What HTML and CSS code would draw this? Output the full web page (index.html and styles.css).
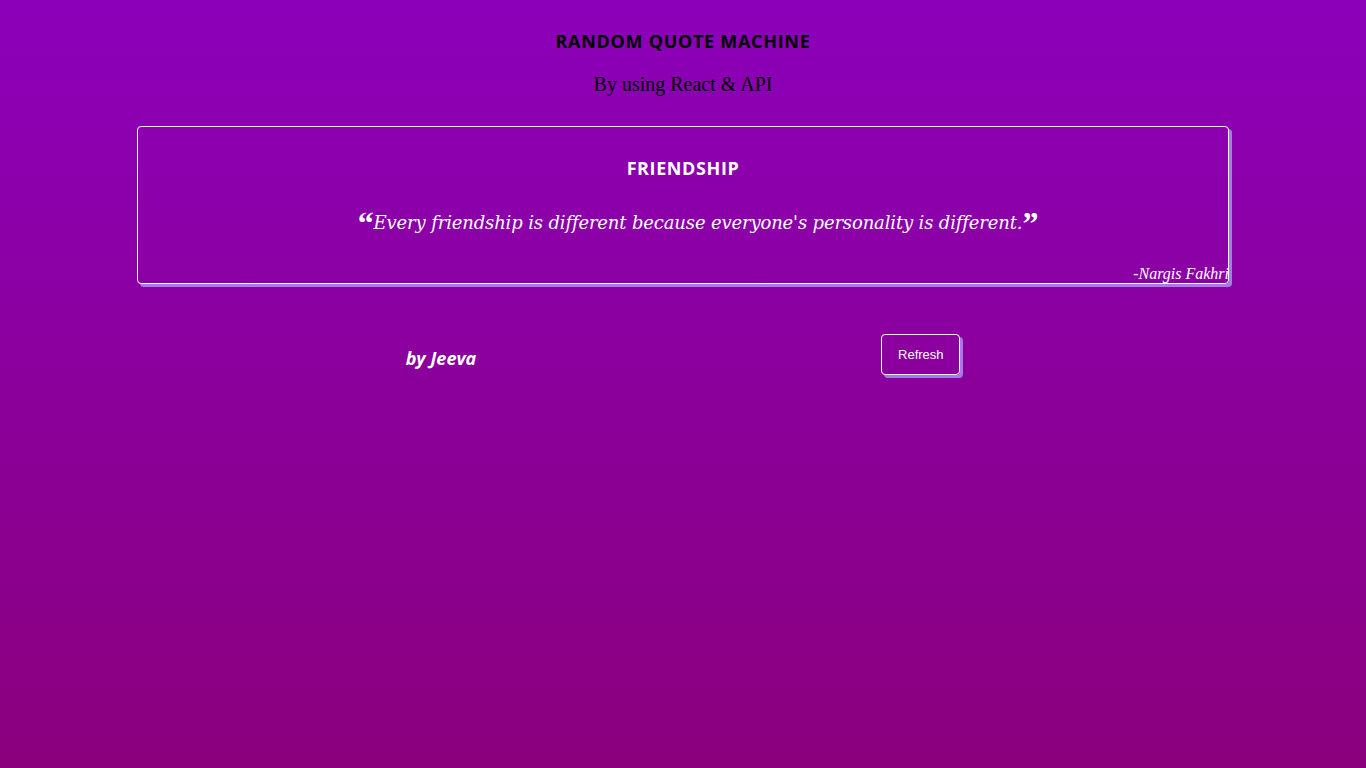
FILE: index.html
```html
<!DOCTYPE html>
<html>
<head>
<meta charset="utf-8">
<link rel="stylesheet" href="styles.css">
</head>
<body>
<div class="app">
  <h1 class="title">RANDOM QUOTE MACHINE</h1>
  <p class="subtitle">By using React &amp; API</p>
  <div class="card">
    <h2 class="category">FRIENDSHIP</h2>
    <p class="quote"><span class="mark">“</span>Every friendship is different because everyone's personality is different.<span class="mark">”</span></p>
    <p class="author">-Nargis Fakhri</p>
  </div>
  <div class="footer">
    <span class="by">by Jeeva</span>
    <button class="refresh">Refresh</button>
  </div>
</div>
</body>
</html>
```
FILE: styles.css
```css
html, body {
  margin: 0;
  padding: 0;
  min-height: 100%;
}
body {
  background: linear-gradient(to bottom, #8c00ba, #8a007c);
  min-height: 768px;
  font-family: "Liberation Serif", serif;
}
.app {
  display: flex;
  flex-direction: column;
  align-items: center;
}
.title {
  margin: 30px 0 0;
  font-family: "Open Sans", sans-serif;
  font-weight: 700;
  font-size: 18px;
  line-height: 22px;
  color: #000;
  letter-spacing: 0.7px;
}
.subtitle {
  margin: 20px 0 0;
  font-size: 20px;
  line-height: 24px;
  color: #000;
}
.card {
  margin-top: 30px;
  width: 1092px;
  height: 158px;
  box-sizing: border-box;
  border: 1px solid #fff;
  border-radius: 4px;
  box-shadow: 3px 3px 0 #a77be6;
  display: flex;
  flex-direction: column;
  align-items: center;
  color: #fff;
}
.category {
  margin: 30px 0 0;
  font-family: "Open Sans", sans-serif;
  font-weight: 700;
  font-size: 18px;
  line-height: 22px;
  letter-spacing: 0.6px;
}
.quote {
  margin: 32px 0 0;
  padding-left: 30px;
  font-family: "DejaVu Serif", serif;
  font-style: italic;
  font-size: 18px;
  line-height: 24px;
  letter-spacing: -0.15px;
}
.mark {
  font-family: "Liberation Serif", serif;
  font-weight: 700;
  font-style: normal;
  font-size: 32px;
  line-height: 20px;
  vertical-align: -5px;
}
.author {
  align-self: flex-end;
  margin: 30px -1px 0 0;
  font-style: italic;
  font-size: 16px;
  line-height: 18px;
}
.footer {
  margin-top: 50px;
  display: flex;
  align-items: center;
  gap: 405px;
}
.by {
  margin-top: 7px;
  font-family: "Open Sans", sans-serif;
  font-weight: 700;
  font-style: italic;
  font-size: 18px;
  color: #fff;
}
.refresh {
  width: 79px;
  height: 41px;
  background: transparent;
  border: 1px solid #fff;
  border-radius: 4px;
  box-shadow: 3px 3px 0 #a77be6;
  color: #fff;
  font-family: "Liberation Sans", sans-serif;
  font-size: 13px;
  padding: 0;
}
```
